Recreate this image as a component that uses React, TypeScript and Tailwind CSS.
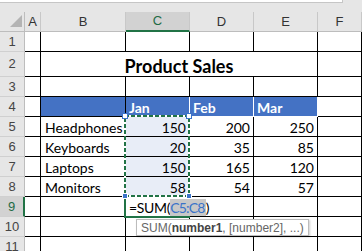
import React from "react";

const FONT = { fontFamily: "Lato, 'Liberation Sans', sans-serif" };
const UIFONT = { fontFamily: "'Liberation Sans', Arial, sans-serif" };

const GRID = "border-[#d4d4d4]";
const BLUE = "border-[#4472c4]";

type CellProps = {
  className?: string;
  children?: React.ReactNode;
  right?: string;
  bottom?: string;
  bg?: string;
};

function Cell({ className = "", children, right = GRID, bottom = GRID, bg = "bg-white" }: CellProps) {
  return (
    <div
      className={`box-border border-r border-b ${right.replace("border-", "border-r-")} ${bottom.replace("border-", "border-b-")} ${bg} ${className}`}
    >
      {children}
    </div>
  );
}

function RowHead({ n, active = false }: { n: number; active?: boolean }) {
  return (
    <div
      className={`box-border border-b border-b-[#d0d0d0] flex items-center justify-center text-[13px] ${
        active
          ? "bg-[#d2d2d2] border-r-2 border-r-[#217346] text-[#1e6b45]"
          : "bg-[#e6e6e6] border-r border-r-[#bdbdbd] text-[#444]"
      }`}
      style={UIFONT}
    >
      {n}
    </div>
  );
}

function ColHead({ l, active = false }: { l: string; active?: boolean }) {
  return (
    <div
      className={`box-border border-r border-r-[#c8c8c8] flex items-center justify-center text-[13px] ${
        active
          ? "bg-[#d2d2d2] border-b-2 border-b-[#217346] text-[#1e6b45]"
          : "bg-[#e6e6e6] border-b border-b-[#bdbdbd] text-[#333]"
      }`}
      style={UIFONT}
    >
      {l}
    </div>
  );
}

const data: [string, number, number, number][] = [
  ["Headphones", 150, 200, 250],
  ["Keyboards", 20, 35, 85],
  ["Laptops", 150, 165, 120],
  ["Monitors", 58, 54, 57],
];

const TXT = "flex items-end leading-[17px]";

export default function App() {
  return (
    <div className="relative w-[362px] h-[251px] overflow-hidden bg-[#e6e6e6] text-black" style={FONT}>
      <div className="h-[3px] w-[343px] box-border bg-white border-b border-r border-[#c6c6c6]" />
      <div className="h-[9px]" />
      <div className="grid grid-cols-[25px_16px_85px_64px_64px_64px_1fr] grid-rows-[20px_20px_25px_20px_20px_20px_20px_20px_20px_20px_20px_20px] text-[14px]">
        {/* header row */}
        <div className="box-border border-r border-r-[#bdbdbd] border-b border-b-[#bdbdbd] bg-[#e6e6e6] relative">
          <svg width="25" height="20" className="absolute left-0 top-0">
            <polygon points="10,15 22,3 22,15" fill="#b4b4b4" />
          </svg>
        </div>
        <ColHead l="A" />
        <ColHead l="B" />
        <ColHead l="C" active />
        <ColHead l="D" />
        <ColHead l="E" />
        <ColHead l="F" />

        {/* row 1 */}
        <RowHead n={1} />
        <Cell />
        <Cell />
        <Cell />
        <Cell />
        <Cell />
        <Cell />

        {/* row 2 */}
        <RowHead n={2} />
        <Cell />
        <Cell className="col-span-4 flex items-end justify-center leading-[20px] text-[18px] font-bold">
          Product Sales
        </Cell>
        <Cell />

        {/* row 3 */}
        <RowHead n={3} />
        <Cell />
        <Cell bottom={BLUE} />
        <Cell bottom={BLUE} />
        <Cell bottom={BLUE} />
        <Cell bottom={BLUE} />
        <Cell />

        {/* row 4 */}
        <RowHead n={4} />
        <Cell right={BLUE} />
        <Cell right="border-[#4472c4]" bottom={BLUE} bg="bg-[#4472c4]" />
        <Cell right="border-[#4472c4]" bottom={BLUE} bg="bg-[#4472c4]" className={`${TXT} pl-[3px] text-white font-bold`}>
          Jan
        </Cell>
        <Cell right="border-[#4472c4]" bottom={BLUE} bg="bg-[#4472c4]" className={`${TXT} pl-[3px] text-white font-bold`}>
          Feb
        </Cell>
        <Cell right={BLUE} bottom={BLUE} bg="bg-[#4472c4]" className={`${TXT} pl-[3px] text-white font-bold`}>
          Mar
        </Cell>
        <Cell />

        {/* rows 5-8 */}
        {data.map(([name, a, b, c], i) => (
          <React.Fragment key={name}>
            <RowHead n={5 + i} />
            <Cell right={BLUE} />
            <Cell bottom={BLUE} className={`${TXT} pl-[4px]`}>
              {name}
            </Cell>
            <Cell bottom={BLUE} bg="bg-[#e8edf7]" className={`${TXT} justify-end pr-[3px]`}>
              {a}
            </Cell>
            <Cell bottom={BLUE} className={`${TXT} justify-end pr-[3px]`}>
              {b}
            </Cell>
            <Cell right={BLUE} bottom={BLUE} className={`${TXT} justify-end pr-[3px]`}>
              {c}
            </Cell>
            <Cell />
          </React.Fragment>
        ))}

        {/* row 9 */}
        <RowHead n={9} active />
        <Cell right={BLUE} />
        <Cell bottom={BLUE} />
        <Cell bottom={BLUE} className={`${TXT} relative z-10 pl-[3px] whitespace-nowrap overflow-visible`}>
          <span className="tracking-[-0.3px]">=SUM(</span>
          <span className="bg-[#c8c8c8] text-[#3a73c9] tracking-[-0.8px] pr-[1px]">C5:C8</span>
          <span>)</span>
        </Cell>
        <Cell bottom={BLUE} />
        <Cell right={BLUE} bottom={BLUE} />
        <Cell />

        {/* rows 10-11 */}
        {[10, 11].map((n) => (
          <React.Fragment key={n}>
            <RowHead n={n} />
            <Cell />
            <Cell />
            <Cell />
            <Cell />
            <Cell />
            <Cell />
          </React.Fragment>
        ))}
      </div>

      {/* active cell border C9 */}
      <div className="absolute z-20 left-[124px] top-[196px] w-[66px] h-[22px] box-border border-l-2 border-b-2 border-[#217346] pointer-events-none" />

      {/* marching ants around C5:C8 */}
      <svg className="absolute z-20 left-0 top-0 pointer-events-none" width="362" height="251">
        <rect x="125" y="116" width="64" height="80" fill="none" stroke="#ffffff" strokeWidth="2" />
        <rect x="125" y="116" width="64" height="80" fill="none" stroke="#217346" strokeWidth="2" strokeDasharray="4 2" />
        <rect x="122.5" y="113.5" width="5" height="5" fill="#ffffff" stroke="#3a73c9" strokeWidth="1" />
        <rect x="186.5" y="113.5" width="5" height="5" fill="#ffffff" stroke="#3a73c9" strokeWidth="1" />
        <rect x="122.5" y="193.5" width="5" height="5" fill="#3a73c9" stroke="#ffffff" strokeWidth="1" />
        <rect x="186.5" y="193.5" width="5" height="5" fill="#3a73c9" stroke="#ffffff" strokeWidth="1" />
      </svg>

      {/* function tooltip */}
      <div
        className="absolute z-30 left-[136px] top-[219px] w-[173px] h-[17px] box-border bg-white border border-[#bcbcbc] shadow-[1px_1px_2px_rgba(0,0,0,0.2)] flex items-center pl-[4px] text-[12px] text-[#666] whitespace-nowrap"
        style={UIFONT}
      >
        SUM(<span className="font-bold text-[#444]">number1</span>, [number2], ...)
      </div>
    </div>
  );
}
